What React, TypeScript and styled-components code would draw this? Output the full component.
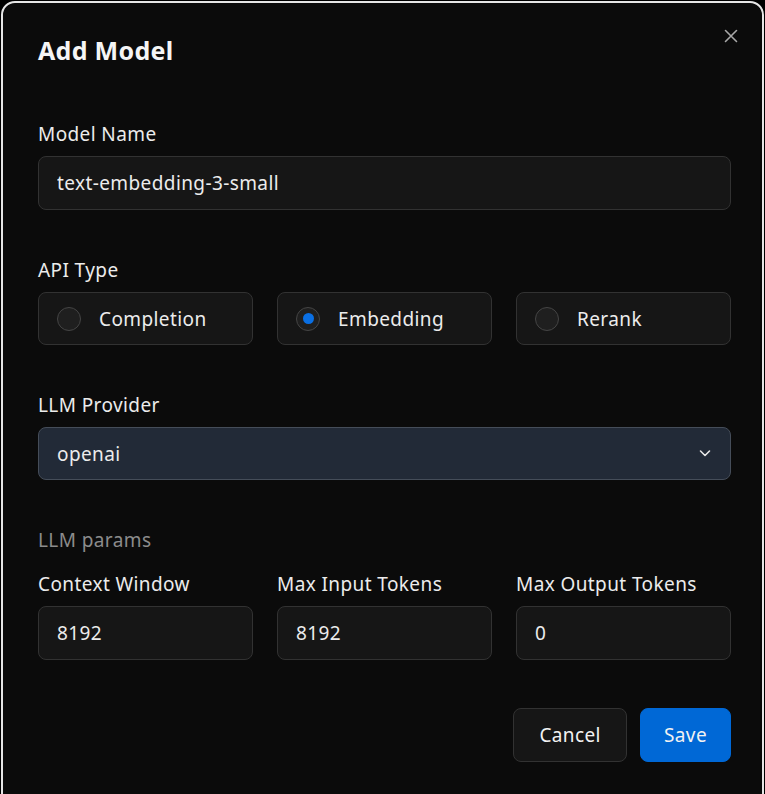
import { useState } from "react";
import styled, { createGlobalStyle } from "styled-components";

const GlobalStyle = createGlobalStyle`
  html, body {
    margin: 0;
    background: #000;
  }
  body {
    font-family: "Noto Sans", "Open Sans", sans-serif;
    color: #ececec;
    letter-spacing: 0.4px;
  }
  * {
    box-sizing: border-box;
  }
`;

const apiTypes = ["Completion", "Embedding", "Rerank"];

const params = [
  { label: "Context Window", value: "8192" },
  { label: "Max Input Tokens", value: "8192" },
  { label: "Max Output Tokens", value: "0" },
];

export default function App() {
  const [name, setName] = useState("text-embedding-3-small");
  const [apiType, setApiType] = useState("Embedding");
  const [provider, setProvider] = useState("openai");

  return (
    <>
      <GlobalStyle />
      <Backdrop>
        <Dialog>
          <Header>
            <Title>Add Model</Title>
            <CloseButton aria-label="Close">
              <svg width="16" height="16" viewBox="0 0 16 16">
                <path
                  d="M2.5 2.5l11 11M13.5 2.5l-11 11"
                  stroke="currentColor"
                  strokeWidth="1.6"
                  strokeLinecap="round"
                />
              </svg>
            </CloseButton>
          </Header>

          <Field>
            <Label>Model Name</Label>
            <TextInput value={name} onChange={(e) => setName(e.target.value)} />
          </Field>

          <Field>
            <Label>API Type</Label>
            <Columns>
              {apiTypes.map((t) => (
                <RadioCard key={t} onClick={() => setApiType(t)}>
                  <RadioDot $checked={apiType === t} />
                  <span>{t}</span>
                </RadioCard>
              ))}
            </Columns>
          </Field>

          <Field>
            <Label>LLM Provider</Label>
            <SelectBox>
              <Select
                value={provider}
                onChange={(e) => setProvider(e.target.value)}
              >
                <option value="openai">openai</option>
                <option value="anthropic">anthropic</option>
                <option value="azure">azure</option>
              </Select>
              <Chevron width="16" height="16" viewBox="0 0 16 16">
                <path
                  d="M3.5 6l4.5 4.5L12.5 6"
                  fill="none"
                  stroke="currentColor"
                  strokeWidth="1.6"
                  strokeLinecap="round"
                  strokeLinejoin="round"
                />
              </Chevron>
            </SelectBox>
          </Field>

          <Params>
            <SectionTitle>LLM params</SectionTitle>
            <Columns>
              {params.map((p) => (
                <Field key={p.label}>
                  <Label>{p.label}</Label>
                  <TextInput defaultValue={p.value} />
                </Field>
              ))}
            </Columns>
          </Params>

          <Footer>
            <Button>Cancel</Button>
            <Button $primary>Save</Button>
          </Footer>
        </Dialog>
      </Backdrop>
    </>
  );
}

const Backdrop = styled.div`
  padding: 1px 1px 0 1px;
  min-height: 100vh;
`;

const Dialog = styled.div`
  background: #0b0b0b;
  border: 2px solid #e6e6e6;
  border-radius: 14px;
  padding: 31px 31px 40px 35px;
  display: flex;
  flex-direction: column;
  gap: 48px;
  min-height: 830px;
`;

const Header = styled.div`
  display: flex;
  align-items: flex-start;
  justify-content: space-between;
  margin-bottom: 8px;
`;

const Title = styled.h2`
  margin: 0;
  font-size: 25px;
  line-height: 32px;
  font-weight: 700;
  letter-spacing: 0.3px;
  color: #f5f5f5;
`;

const CloseButton = styled.button`
  background: none;
  border: none;
  padding: 0;
  margin: -6px -8px 0 0;
  color: #a8a8a8;
  display: flex;
  cursor: pointer;
`;

const Field = styled.div`
  display: flex;
  flex-direction: column;
  gap: 10px;
`;

const Label = styled.label`
  font-size: 19px;
  line-height: 24px;
  color: #ececec;
`;

const TextInput = styled.input`
  height: 54px;
  width: 100%;
  background: #161616;
  border: 1px solid #323232;
  border-radius: 8px;
  padding: 0 18px;
  font: inherit;
  font-size: 19px;
  letter-spacing: 0.4px;
  color: #ececec;
  outline: none;
`;

const Columns = styled.div`
  display: grid;
  grid-template-columns: repeat(3, 1fr);
  gap: 24px;
`;

const RadioCard = styled.div`
  height: 53px;
  display: flex;
  align-items: center;
  gap: 18px;
  padding: 0 18px;
  background: #161616;
  border: 1px solid #323232;
  border-radius: 8px;
  font-size: 19px;
  color: #ececec;
  cursor: pointer;
`;

const RadioDot = styled.span<{ $checked: boolean }>`
  width: 24px;
  height: 24px;
  border-radius: 50%;
  background: #1f1f1f;
  border: 1px solid #454545;
  display: grid;
  place-items: center;

  &::after {
    content: "";
    width: 11px;
    height: 11px;
    border-radius: 50%;
    background: ${(p) => (p.$checked ? "#0a6fe3" : "transparent")};
  }
`;

const SelectBox = styled.div`
  position: relative;
`;

const Select = styled.select`
  appearance: none;
  width: 100%;
  height: 53px;
  background: #222a37;
  border: 1px solid #454d59;
  border-radius: 8px;
  padding: 0 18px;
  font: inherit;
  font-size: 19px;
  letter-spacing: 0.4px;
  color: #ececec;
  outline: none;
`;

const Chevron = styled.svg`
  position: absolute;
  right: 18px;
  top: 18px;
  color: #e6e6e6;
  pointer-events: none;
`;

const Params = styled.div`
  display: flex;
  flex-direction: column;
  gap: 20px;
`;

const SectionTitle = styled.div`
  font-size: 19px;
  line-height: 24px;
  color: #8c8c8c;
`;

const Footer = styled.div`
  display: flex;
  justify-content: flex-end;
  gap: 13px;
`;

const Button = styled.button<{ $primary?: boolean }>`
  height: 54px;
  padding: 0 ${(p) => (p.$primary ? "23px" : "25px")};
  border-radius: 8px;
  font: inherit;
  font-size: 19px;
  letter-spacing: 0.4px;
  color: #f2f2f2;
  cursor: pointer;
  background: ${(p) => (p.$primary ? "#0068d6" : "#161616")};
  border: 1px solid ${(p) => (p.$primary ? "#0068d6" : "#323232")};
`;
